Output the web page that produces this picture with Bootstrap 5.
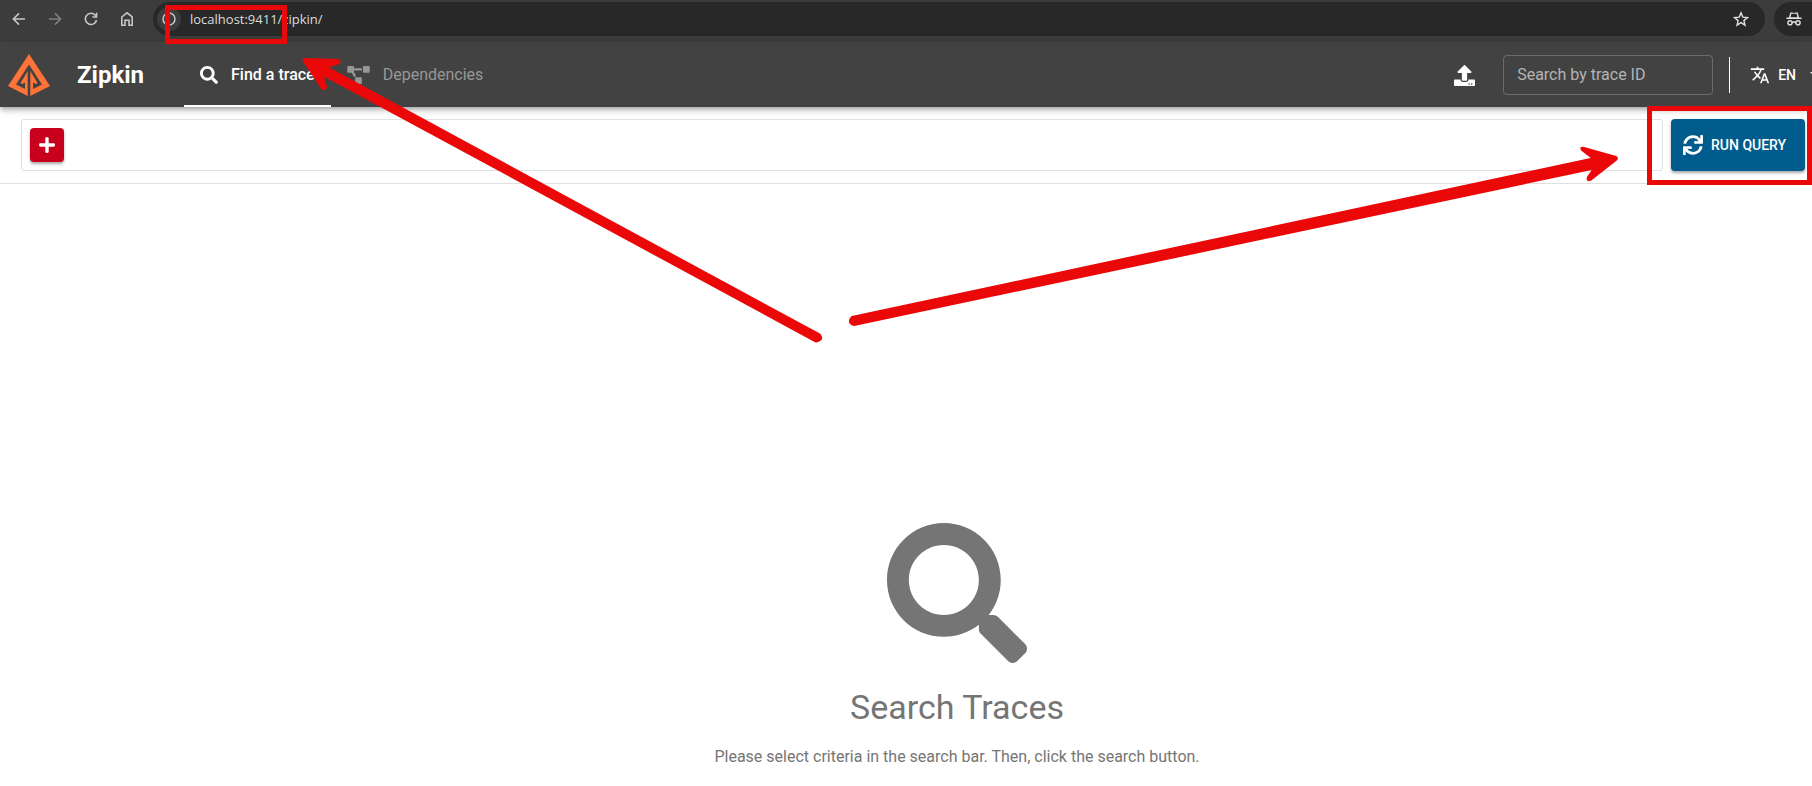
<!DOCTYPE html>
<html lang="en">
<head>
<meta charset="utf-8">
<meta name="viewport" content="width=device-width, initial-scale=1">
<title>Zipkin</title>
<link href="https://cdn.jsdelivr.net/npm/bootstrap@5.3.0/dist/css/bootstrap.min.css" rel="stylesheet">
<style>
body{font-family:Roboto,"Liberation Sans",sans-serif;color:#757575;background:#fff;overflow-x:hidden}
svg{display:block;flex-shrink:0}
button{border:0;background:none;padding:0}
.browser-bar{background:#3c3c3c;height:43px;padding:2px 0 6px 8px;border-bottom:1px solid #474747;color:#c7c7c7}
.browser-btn{width:36px;height:34px;color:#c7c7c7}
.browser-btn.first-btn{width:22px;margin-right:7px}
.browser-btn:disabled{color:#808080}
.address{background:#282828;border-radius:17px;height:34px;padding:0 16px 0 4px}
.site-info{width:24px;height:24px;border-radius:50%;background:#3c3c3c;color:#c7c7c7}
.address input{background:none;border:0;outline:0;padding:0;margin-left:9px;color:#dcdcdc;font:13px "Open Sans","Noto Sans",sans-serif}
.incognito{background:#282828;border-radius:17px 0 0 17px;height:34px;width:38px;margin-left:9px;padding-left:12px;color:#e3e3e3}
.app-bar{background:#424242;height:64px;box-shadow:0 2px 4px -1px rgba(0,0,0,.2),0 4px 5px rgba(0,0,0,.14),0 1px 10px rgba(0,0,0,.12);z-index:2}
.brand-name{font-size:24px;font-weight:700;color:#fff;margin:0 40px 0 27px;line-height:32px}
.app-tab{height:64px;padding:0 16px;gap:13px;font-size:16px;line-height:24px;color:#979797;text-decoration:none}
.app-tab.active{color:#fff;box-shadow:inset 0 -2px #fff;font-weight:500}
.app-tab:hover{color:#fff}
.trace-input{width:210px;height:40px;background:none;border:1px solid #6c6c6c;border-radius:4px;color:#fff;padding:0 13px 2px;font-size:16px}
.trace-input::placeholder{color:#b4b4b4;opacity:1}
.rule{width:1px;height:36px;background:#fff;margin:0 20px 0 16px}
.lang{color:#fff;font-size:14px;font-weight:500;line-height:20px}
.caret-clip{width:2px;overflow:hidden;margin-left:14px}
.query-bar{padding:12px 7px 12px 21px;border-bottom:1px solid #e0e0e0}
.criteria{border:1px solid #e0e0e0;border-radius:3px;height:52px;padding:0 8px}
.add-btn{width:34px;height:34px;border-radius:4px;background:#c8001e;color:#fff;box-shadow:0 2px 3px rgba(0,0,0,.35)}
.run-btn{width:134px;height:52px;padding-left:12px;border-radius:4px;background:#005c8d;color:#fff;font-size:14px;font-weight:500;box-shadow:0 2px 3px rgba(0,0,0,.35)}
.empty{padding:339px 0 8px 102px}
.empty h1{font-size:34px;font-weight:400;line-height:40px;margin:24px 0 18px}
.empty p{font-size:16px;line-height:24px;margin:0}
.notes{top:0;left:0;z-index:5;pointer-events:none}
</style>
</head>
<body>
<nav class="browser-bar d-flex align-items-center" aria-label="Browser">
  <button class="browser-btn first-btn d-flex align-items-center justify-content-center" aria-label="Back"><svg width="14" height="14" viewBox="0 0 14 14" fill="none" stroke="currentColor" stroke-width="1.6"><path d="M13 7H1.600M7 1.400L1.400 7 7 12.600"/></svg></button>
  <button class="browser-btn d-flex align-items-center justify-content-center" disabled aria-label="Forward"><svg width="14" height="14" viewBox="0 0 14 14" fill="none" stroke="currentColor" stroke-width="1.6"><path d="M1 7h11.400M7 1.400L12.600 7 7 12.600"/></svg></button>
  <button class="browser-btn d-flex align-items-center justify-content-center" aria-label="Reload"><svg width="14" height="14" viewBox="0 0 14 14" fill="none" stroke="currentColor" stroke-width="1.600"><path d="M12.500 8A5.600 5.600 0 1 1 11.300 3.300L12.500 4.600M12.600 .8V5H8.400"/></svg></button>
  <button class="browser-btn d-flex align-items-center justify-content-center" aria-label="Home"><svg width="14" height="16" viewBox="0 0 14 16" fill="none" stroke="currentColor" stroke-width="1.600"><path d="M1.800 6L7 1.800 12.200 6v8.200H9V9.200H5v5H1.800z"/></svg></button>
  <div class="address flex-grow-1 d-flex align-items-center ms-2">
    <button class="site-info d-flex align-items-center justify-content-center" aria-label="Site information"><svg width="14" height="14" viewBox="0 0 14 14" fill="none" stroke="currentColor" stroke-width="1.500"><circle cx="7" cy="7" r="6"/><path d="M7 6.200v4M7 3.600v1.500"/></svg></button>
    <input class="flex-grow-1" aria-label="Address" value="localhost:9411/zipkin/">
    <button aria-label="Bookmark"><svg width="16" height="16" viewBox="0 0 16 16" fill="none" stroke="#dedede" stroke-width="1.400"><path d="M8 1.800l1.800 4.300 4.700.4-3.600 3.100 1.100 4.600L8 11.700l-4 2.500 1.100-4.600L1.500 6.500l4.700-.4z"/></svg></button>
  </div>
  <button class="incognito d-flex align-items-center" aria-label="Incognito"><svg width="16" height="16" viewBox="0 0 16 16"><path fill="currentColor" d="M4.300 1.500h2L8 2l1.700-.5h2L13 6.500H15.500V8H.5V6.500H3z"/><path d="M5.300 2.800h5.400l.7 3.400H4.600z" fill="#282828"/><g fill="none" stroke="currentColor" stroke-width="1.400"><circle cx="4" cy="11.800" r="2.100"/><circle cx="12" cy="11.800" r="2.100"/><path d="M6 11.500q2-1 4 0"/></g></svg></button>
</nav>

<header class="app-bar d-flex align-items-center position-relative ps-2">
  <svg width="42" height="42" viewBox="0 0 42 42" fill="#ff7238"><path d="M21 0L0 32 19.700 42V17L12.500 29l1.500 1 3-1.500V35L8 30.500 21 10.500 34 30.500 25 35V28.500l3 1.500 1.500-1L22.300 17V42L42 32z"/></svg>
  <span class="brand-name">Zipkin</span>
  <a href="#" class="app-tab active d-flex align-items-center"><svg width="18" height="18" viewBox="0 0 512 512" fill="currentColor"><path d="M505 442.700L405.300 343c-4.500-4.500-10.600-7-17-7H372c27.600-35.300 44-79.700 44-128C416 93.100 322.900 0 208 0S0 93.100 0 208s93.100 208 208 208c48.300 0 92.700-16.400 128-44v16.300c0 6.400 2.500 12.500 7 17l99.700 99.700c9.400 9.400 24.600 9.400 33.900 0l28.300-28.300c9.400-9.400 9.400-24.600.1-34zM208 336c-70.700 0-128-57.200-128-128 0-70.700 57.200-128 128-128 70.700 0 128 57.200 128 128 0 70.700-57.200 128-128 128z"/></svg><span>Find a trace</span></a>
  <a href="#" class="app-tab d-flex align-items-center"><svg width="23" height="18" viewBox="0 0 640 512" fill="currentColor"><path d="M384 320H256c-17.670 0-32 14.330-32 32v128c0 17.670 14.330 32 32 32h128c17.670 0 32-14.330 32-32V352c0-17.670-14.330-32-32-32zM192 32c0-17.670-14.330-32-32-32H32C14.330 0 0 14.330 0 32v128c0 17.670 14.330 32 32 32h95.720l73.160 128.040C211.980 300.980 232.400 288 256 288h.28L192 175.510V128h224V64H192V32zM608 0H480c-17.670 0-32 14.330-32 32v128c0 17.670 14.330 32 32 32h128c17.670 0 32-14.330 32-32V32c0-17.670-14.330-32-32-32z"/></svg><span>Dependencies</span></a>
  <button class="ms-auto me-4 text-white" aria-label="Upload JSON"><svg width="21" height="21" viewBox="0 0 512 512" fill="currentColor" class="me-1"><path d="M296 384h-80c-13.300 0-24-10.700-24-24V192h-87.700c-17.800 0-26.700-21.500-14.100-34.100L242.300 5.700c7.500-7.500 19.800-7.500 27.300 0l152.200 152.200c12.600 12.600 3.700 34.100-14.100 34.100H320v168c0 13.300-10.700 24-24 24zm216-8v112c0 13.300-10.700 24-24 24H24c-13.300 0-24-10.700-24-24V376c0-13.300 10.700-24 24-24h136v8c0 30.900 25.100 56 56 56h80c30.900 0 56-25.100 56-56v-8h136c13.300 0 24 10.700 24 24zm-124 88c0-11-9-20-20-20s-20 9-20 20 9 20 20 20 20-9 20-20zm64 0c0-11-9-20-20-20s-20 9-20 20 9 20 20 20 20-9 20-20z"/></svg></button>
  <input class="trace-input" placeholder="Search by trace ID" aria-label="Search by trace ID">
  <div class="rule"></div>
  <button class="lang d-flex align-items-center"><svg width="20" height="20" viewBox="0 0 24 24" fill="currentColor" class="me-2"><path d="M12.870 15.070l-2.540-2.510.03-.03c1.740-1.940 2.980-4.170 3.710-6.530H17V4h-7V2H8v2H1v1.990h11.170C11.500 7.920 10.440 9.750 9 11.350 8.070 10.320 7.300 9.190 6.690 8h-2c.73 1.630 1.730 3.170 2.980 4.560l-5.090 5.020L4 19l5-5 3.110 3.110.76-2.040zM18.500 10h-2L12 22h2l1.120-3h4.750L21 22h2l-4.500-12zm-2.620 7l1.620-4.330L19.120 17h-3.240z"/></svg>EN<span class="caret-clip"><svg width="10" height="6" viewBox="0 0 10 6"><path d="M0 0h10L5 5z" fill="#fff"/></svg></span></button>
</header>

<section class="query-bar d-flex gap-2">
  <div class="criteria flex-grow-1 d-flex align-items-center">
    <button class="add-btn d-flex align-items-center justify-content-center" aria-label="Add criterion"><svg width="16" height="18" viewBox="0 0 448 512" fill="currentColor"><path d="M416 208H272V64c0-17.670-14.330-32-32-32h-32c-17.670 0-32 14.330-32 32v144H32c-17.670 0-32 14.330-32 32v32c0 17.670 14.330 32 32 32h144v144c0 17.670 14.330 32 32 32h32c17.670 0 32-14.330 32-32V304h144c17.670 0 32-14.330 32-32v-32c0-17.670-14.330-32-32-32z"/></svg></button>
  </div>
  <button class="run-btn d-flex align-items-center gap-2"><svg width="20" height="20" viewBox="0 0 512 512" fill="currentColor"><path d="M440.650 12.570l4 82.770A247.160 247.160 0 0 0 255.830 8C134.730 8 33.910 94.920 12.290 209.820A12 12 0 0 0 24.090 224h49.050a12 12 0 0 0 11.670-9.260 175.910 175.910 0 0 1 317-56.940l-101.460-4.860a12 12 0 0 0-12.570 12v47.410a12 12 0 0 0 12 12H500a12 12 0 0 0 12-12V12a12 12 0 0 0-12-12h-47.370a12 12 0 0 0-11.980 12.570zM255.830 432a175.610 175.610 0 0 1-146-77.800l101.800 4.870a12 12 0 0 0 12.570-12v-47.400a12 12 0 0 0-12-12H12a12 12 0 0 0-12 12V500a12 12 0 0 0 12 12h47.350a12 12 0 0 0 12-12.600l-4.150-82.570A247.170 247.170 0 0 0 255.830 504c121.110 0 221.930-86.920 243.550-201.820a12 12 0 0 0-11.800-14.180h-49.050a12 12 0 0 0-11.670 9.260A175.860 175.860 0 0 1 255.830 432z"/></svg>RUN QUERY</button>
</section>

<main class="empty d-flex flex-column align-items-center text-center">
  <svg width="140" height="140" viewBox="0 0 512 512" fill="currentColor"><path d="M505 442.700L405.300 343c-4.500-4.500-10.600-7-17-7H372c27.600-35.300 44-79.700 44-128C416 93.100 322.900 0 208 0S0 93.100 0 208s93.100 208 208 208c48.300 0 92.700-16.400 128-44v16.300c0 6.400 2.500 12.500 7 17l99.700 99.700c9.400 9.400 24.600 9.400 33.900 0l28.300-28.300c9.400-9.400 9.400-24.600.1-34zM208 336c-70.700 0-128-57.200-128-128 0-70.700 57.200-128 128-128 70.700 0 128 57.200 128 128 0 70.700-57.200 128-128 128z"/></svg>
  <h1>Search Traces</h1>
  <p>Please select criteria in the search bar. Then, click the search button.</p>
</main>

<!-- Callouts: framed address and button, with an arrow to each -->
<svg class="notes position-absolute" width="1812" height="360" viewBox="0 0 1812 360" aria-hidden="true">
  <g fill="none" stroke="#ea0808" stroke-width="5"><rect x="167.500" y="7.500" width="117" height="34"/><rect x="1649.500" y="108.500" width="160" height="74"/></g>
  <g fill="#ea0808" stroke="#ea0808" stroke-width="2" stroke-linejoin="round">
    <path d="M304 59L338 60Q341 61.500 338 63.500L326 67 819.500 334.500Q824 340 816 341.500L322.500 74.500 326 87Q324.500 90.500 322 88.500L304 61Q303 59.500 304 59z"/>
    <path d="M852 317L1593 158.500 1582 150Q1580 147 1584 148L1616 157Q1617.500 158 1616.500 159.500L1591 179.500Q1586.500 181.500 1588 177L1594 168.500 854 325Q847 323 852 317z"/>
  </g>
</svg>
<script src="https://cdn.jsdelivr.net/npm/bootstrap@5.3.0/dist/js/bootstrap.bundle.min.js"></script>
</body>
</html>
